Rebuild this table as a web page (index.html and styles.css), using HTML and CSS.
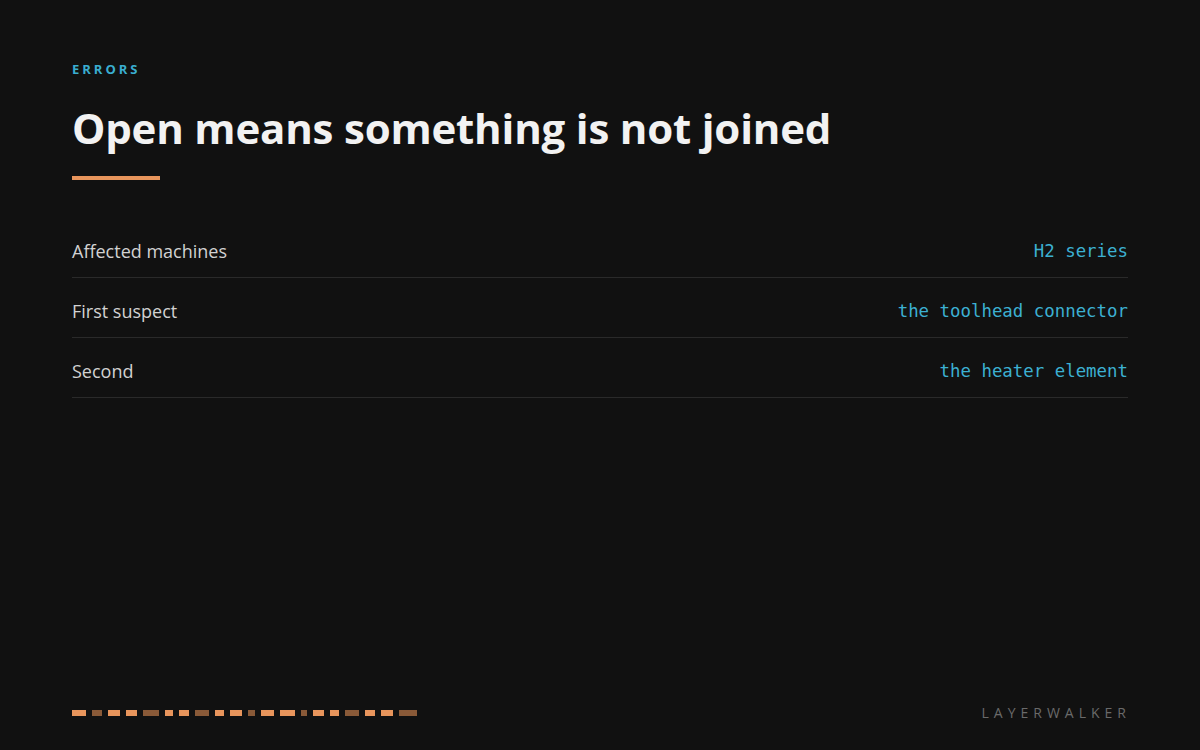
FILE: index.html
```html
<!DOCTYPE html>
<html lang="en">
<head>
    <meta charset="UTF-8">
    <meta name="viewport" content="width=device-width, initial-scale=1.0">
    <title>Errors - Layerwalker</title>
    <link rel="stylesheet" href="styles.css">
</head>
<body>
    <div class="page">
        <div class="eyebrow">ERRORS</div>
        <h1>Open means something is not joined</h1>
        <div class="accent"></div>

        <div class="rows">
            <div class="row">
                <span class="label">Affected machines</span>
                <span class="value">H2 series</span>
            </div>
            <div class="row">
                <span class="label">First suspect</span>
                <span class="value">the toolhead connector</span>
            </div>
            <div class="row">
                <span class="label">Second</span>
                <span class="value">the heater element</span>
            </div>
        </div>

        <div class="footer">
            <div class="layers">
                <span class="seg" style="width:14px"></span>
                <span class="seg dim" style="width:10px"></span>
                <span class="seg" style="width:12px"></span>
                <span class="seg" style="width:11px"></span>
                <span class="seg dim" style="width:16px"></span>
                <span class="seg" style="width:8px"></span>
                <span class="seg" style="width:10px"></span>
                <span class="seg dim" style="width:14px"></span>
                <span class="seg" style="width:9px"></span>
                <span class="seg" style="width:12px"></span>
                <span class="seg dim" style="width:7px"></span>
                <span class="seg" style="width:13px"></span>
                <span class="seg" style="width:15px"></span>
                <span class="seg dim" style="width:6px"></span>
                <span class="seg" style="width:11px"></span>
                <span class="seg" style="width:9px"></span>
                <span class="seg dim" style="width:14px"></span>
                <span class="seg" style="width:10px"></span>
                <span class="seg" style="width:12px"></span>
                <span class="seg dim" style="width:18px"></span>
            </div>
            <div class="brand">LAYERWALKER</div>
        </div>
    </div>
</body>
</html>
```

FILE: styles.css
```css
body {
    margin: 0;
    background-color: #111111;
    font-family: "Open Sans", "Noto Sans", sans-serif;
    color: #f2f2f2;
    overflow: hidden;
}
.page {
    height: 100vh;
    box-sizing: border-box;
    padding: 59px 72px 27px;
    display: flex;
    flex-direction: column;
}

/* header */
.eyebrow {
    font-size: 13px;
    line-height: 20px;
    font-weight: 700;
    letter-spacing: 3px;
    color: #3aaed0;
}
h1 {
    margin: 23px 0 0;
    font-size: 42px;
    line-height: 52px;
    font-weight: 700;
    letter-spacing: -0.2px;
    color: #f2f2f2;
}
.accent {
    width: 88px;
    height: 4px;
    margin-top: 22px;
    background-color: #e8955c;
}

/* rows */
.rows {
    margin-top: 38px;
}
.row {
    display: flex;
    justify-content: space-between;
    align-items: center;
    height: 24px;
    padding: 21px 0 14px;
    line-height: 24px;
    border-bottom: 1px solid #2a2a2a;
}
.row .label {
    font-size: 18px;
    color: #d2d2d2;
}
.row .value {
    font-family: "DejaVu Sans Mono", "Liberation Mono", monospace;
    font-size: 17.4px;
    color: #3cb0d2;
}

/* footer */
.footer {
    margin-top: auto;
    display: flex;
    justify-content: space-between;
    align-items: center;
    line-height: 20px;
}
.layers {
    display: flex;
    gap: 6px;
}
.seg {
    height: 6px;
    background-color: #e8955c;
}
.seg.dim {
    background-color: #8a5a38;
}
.brand {
    font-size: 14px;
    letter-spacing: 5px;
    margin-right: -3px;
    color: #6a6a6a;
}
```
